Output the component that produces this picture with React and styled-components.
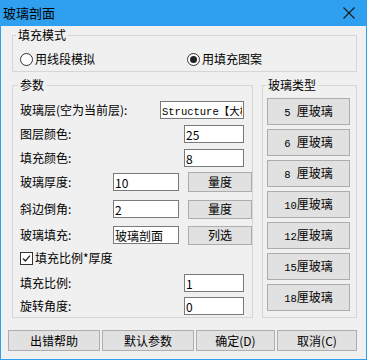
import React from "react";
import styled, { createGlobalStyle } from "styled-components";

const GlobalStyle = createGlobalStyle`
  body {
    margin: 0;
    background: #ffffff;
    font-family: "Noto Sans CJK SC", "Liberation Sans", sans-serif;
  }
`;

const CJK = `"Noto Sans CJK SC", "Liberation Sans", sans-serif`;

const App = () => {
    return (
        <>
            <GlobalStyle />
            <Window>
                <TitleBar>
                    <Title>玻璃剖面</Title>
                    <CloseIcon width="12" height="12" viewBox="0 0 12 12">
                        <path d="M0.5 0.5 L11.5 11.5 M11.5 0.5 L0.5 11.5" stroke="#1a1a1a" strokeWidth="1.1" fill="none" />
                    </CloseIcon>
                </TitleBar>

                <Content>
                    <Group $mt="1px" $pl="7px" $pb="2px">
                        <Legend $ml="-4px">填充模式</Legend>
                        <RadioRow>
                            <RadioItem $w="167px">
                                <RadioCircle />
                                <span>用线段模拟</span>
                            </RadioItem>
                            <RadioItem>
                                <RadioCircle $checked />
                                <span>用填充图案</span>
                            </RadioItem>
                        </RadioRow>
                    </Group>

                    <GroupRow>
                        <Group $w="241px" $h="241px" $pl="7px" $pr="8px" $pt="5px">
                            <Legend $ml="-2px">参数</Legend>
                            <Row>
                                <Label>玻璃层(空为当前层):</Label>
                                <Field $w="84px" $mono readOnly defaultValue="Structure【大样】" />
                            </Row>
                            <Row>
                                <Label>图层颜色:</Label>
                                <Field $w="60px" readOnly defaultValue="25" />
                            </Row>
                            <Row>
                                <Label>填充颜色:</Label>
                                <Field $w="60px" readOnly defaultValue="8" />
                            </Row>
                            <PickRow>
                                <Label>玻璃厚度:</Label>
                                <Field $w="66px" readOnly defaultValue="10" />
                                <Button $w="64px" $h="20px">量度</Button>
                            </PickRow>
                            <PickRow $mt="3px">
                                <Label>斜边倒角:</Label>
                                <Field $w="66px" readOnly defaultValue="2" />
                                <Button $w="64px" $h="19px">量度</Button>
                            </PickRow>
                            <PickRow $mt="2px">
                                <Label>玻璃填充:</Label>
                                <Field $w="66px" readOnly defaultValue="玻璃剖面" />
                                <Button $w="64px" $h="19px">列选</Button>
                            </PickRow>
                            <CheckRow>
                                <CheckBox>
                                    <svg width="11" height="11" viewBox="0 0 11 11">
                                        <path d="M2 5.5 L4.4 8 L9 2.6" stroke="#222" strokeWidth="1.3" fill="none" />
                                    </svg>
                                </CheckBox>
                                <span>填充比例*厚度</span>
                            </CheckRow>
                            <Row $mt="2px">
                                <Label>填充比例:</Label>
                                <Field $w="60px" readOnly defaultValue="1" />
                            </Row>
                            <Row $mt="-1px">
                                <Label>旋转角度:</Label>
                                <Field $w="60px" readOnly defaultValue="0" />
                            </Row>
                        </Group>

                        <Group $w="95px" $h="241px" $pl="4px" $pt="5px">
                            <Legend $ml="-1px">玻璃类型</Legend>
                            <TypeList>
                                {["5 ", "6 ", "8 ", "10", "12", "15", "18"].map((n) => (
                                    <Button key={n} $w="83px" $h="27px">
                                        <Num>{n}</Num>厘玻璃
                                    </Button>
                                ))}
                            </TypeList>
                        </Group>
                    </GroupRow>
                </Content>

                <ButtonBar>
                    <Button $h="21px">出错帮助</Button>
                    <Button $h="21px">默认参数</Button>
                    <Button $h="21px">确定(D)</Button>
                    <Button $h="21px">取消(C)</Button>
                </ButtonBar>
            </Window>
        </>
    );
};

export default App;

const Window = styled.div`
  width: 367px;
  height: 360px;
  box-sizing: border-box;
  border: 1px solid #2ea0ef;
  border-top: none;
  background: #f0f0f0;
  display: flex;
  flex-direction: column;
  font-family: ${CJK};
  font-size: 12px;
  color: #000;
`;

const TitleBar = styled.div`
  height: 26px;
  margin: 0 -1px;
  background: #2ea0ef;
  display: flex;
  align-items: center;
  justify-content: space-between;
  padding: 0 12px 0 3px;
`;

const Title = styled.span`
  font-size: 13px;
  line-height: 16px;
  color: #000;
`;

const CloseIcon = styled.svg`
  display: block;
`;

const Content = styled.div`
  padding: 0 9px 0 11px;
  display: flex;
  flex-direction: column;
`;

const Group = styled.fieldset`
  margin: ${(props) => props.$mt || "0"} 0 0 0;
  min-width: 0;
  width: ${(props) => props.$w || "auto"};
  height: ${(props) => props.$h || "auto"};
  box-sizing: border-box;
  border: 1px solid #d6d6d6;
  padding: ${(props) => props.$pt || "6px"} ${(props) => props.$pr || "0"} ${(props) => props.$pb || "0"} ${(props) => props.$pl || "0"};
  display: flex;
  flex-direction: column;
`;

const Legend = styled.legend`
  padding: 0 2px;
  margin-left: ${(props) => props.$ml};
  font-size: 12px;
  line-height: 16px;
`;

const RadioRow = styled.div`
  display: flex;
  align-items: center;
  height: 20px;
`;

const RadioItem = styled.label`
  display: flex;
  align-items: center;
  gap: 2px;
  width: ${(props) => props.$w || "auto"};
  line-height: 16px;
`;

const RadioCircle = styled.span`
  width: 13px;
  height: 13px;
  box-sizing: border-box;
  border: 1px solid #333;
  border-radius: 50%;
  background: #fff;
  display: flex;
  align-items: center;
  justify-content: center;

  &::after {
    content: "";
    display: ${(props) => (props.$checked ? "block" : "none")};
    width: 7px;
    height: 7px;
    border-radius: 50%;
    background: #222;
  }
`;

const GroupRow = styled.div`
  display: flex;
  gap: 9px;
  margin-top: 5px;
`;

const Row = styled.div`
  display: flex;
  align-items: center;
  justify-content: space-between;
  height: 24px;
  margin-top: ${(props) => props.$mt || "0"};
  flex: none;
`;

const PickRow = styled.div`
  display: grid;
  grid-template-columns: 84px 66px 64px;
  column-gap: 9px;
  align-items: center;
  height: 24px;
  margin-top: ${(props) => props.$mt || "0"};
  flex: none;
`;

const Label = styled.span`
  line-height: 16px;
  white-space: nowrap;
`;

const Field = styled.input`
  width: ${(props) => props.$w};
  height: 18px;
  box-sizing: border-box;
  border: 1px solid #7a7a7a;
  background: #fff;
  padding: 0 1px;
  margin: 0;
  outline: none;
  font-family: ${(props) => (props.$mono ? `"Liberation Mono", "Noto Sans CJK SC", monospace` : CJK)};
  font-size: ${(props) => (props.$mono ? "10.5px" : "12px")};
  color: #000;
`;

const Button = styled.button`
  width: ${(props) => props.$w || "auto"};
  height: ${(props) => props.$h || "20px"};
  box-sizing: border-box;
  border: 1px solid #adadad;
  background: #e1e1e1;
  padding: 0;
  margin: 0;
  font-family: ${CJK};
  font-size: 12px;
  color: #000;
  line-height: 16px;
  white-space: pre;
`;

const Num = styled.span`
  font-family: "Liberation Mono", monospace;
  font-size: 10.5px;
`;

const CheckRow = styled.label`
  display: flex;
  align-items: center;
  gap: 2px;
  height: 22px;
  flex: none;
  line-height: 16px;
`;

const CheckBox = styled.span`
  width: 13px;
  height: 13px;
  box-sizing: border-box;
  border: 1px solid #333;
  background: #fff;
  display: flex;
  align-items: center;
  justify-content: center;
`;

const TypeList = styled.div`
  display: flex;
  flex-direction: column;
  gap: 4px;
`;

const ButtonBar = styled.div`
  display: grid;
  grid-template-columns: 92px 92px 79px 80px;
  column-gap: 2px;
  padding-left: 7px;
  margin-top: 12px;
`;
